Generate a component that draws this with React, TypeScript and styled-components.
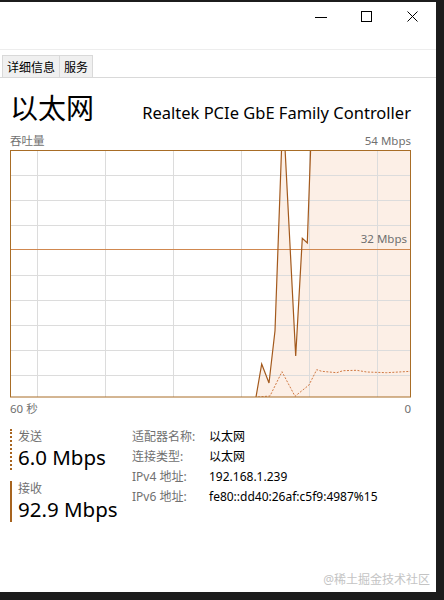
import React from "react";
import styled, { createGlobalStyle } from "styled-components";

const CJK = `"Noto Sans", "Noto Sans CJK SC", sans-serif`;
const CJK_FIRST = `"Noto Sans CJK SC", "Noto Sans", sans-serif`;
const ACCENT = "#a7641f";

const GlobalStyle = createGlobalStyle`
  html, body {
    margin: 0;
    padding: 0;
    background: #1c1c1c;
  }
  body {
    font-family: ${CJK};
    overflow: hidden;
  }
`;

const Window = styled.div`
  position: relative;
  width: 436px;
  height: 590px;
  margin-top: 2px;
  background: #ffffff;
  display: flex;
  flex-direction: column;
`;

const TitleBar = styled.div`
  height: 47px;
  display: flex;
  justify-content: flex-end;
  align-items: flex-start;
  border-bottom: 1px solid #ededed;
`;

const CtrlButton = styled.div`
  width: 46px;
  height: 28px;
  display: flex;
  align-items: center;
  justify-content: center;
  color: #000;
`;

const TabStrip = styled.div`
  height: 27px;
  display: flex;
  align-items: flex-end;
  padding-left: 2px;
  border-bottom: 1px solid #d9d9d9;
`;

const Tab = styled.div`
  height: 21px;
  padding: 0 4px;
  display: flex;
  align-items: center;
  background: #f0f0f0;
  border: 1px solid #d9d9d9;
  border-bottom: none;
  margin-right: -1px;
  font-size: 12px;
  color: #000;
`;

const Content = styled.div`
  padding: 0 25px 0 10px;
  display: flex;
  flex-direction: column;
`;

const Header = styled.div`
  margin-top: 12px;
  height: 40px;
  display: flex;
  justify-content: space-between;
  align-items: baseline;
`;

const Title = styled.div`
  font-size: 28px;
  line-height: 36px;
  color: #000;
`;

const Subtitle = styled.div`
  font-size: 16.5px;
  color: #000;
`;

const AxisRow = styled.div<{ $h: number }>`
  height: ${({ $h }) => $h}px;
  display: flex;
  justify-content: space-between;
  align-items: center;
  font-size: 11.5px;
  color: #707070;
`;

const GraphWrap = styled.div`
  position: relative;
  width: 401px;
  height: 248px;
`;

const ScaleLabel = styled.div`
  position: absolute;
  right: 4px;
  top: 81px;
  font-size: 11.5px;
  color: #707070;
`;

const Stats = styled.div`
  margin-top: 11px;
  display: flex;
`;

const StatCol = styled.div`
  width: 122px;
  display: flex;
  flex-direction: column;
  gap: 11px;
`;

const Stat = styled.div<{ $dotted?: boolean }>`
  border-left: 2px ${({ $dotted }) => ($dotted ? "dotted" : "solid")} ${ACCENT};
  padding-left: 6px;
  height: 41px;
  display: flex;
  flex-direction: column;
`;

const StatLabel = styled.div`
  font-family: ${CJK_FIRST};
  font-size: 12px;
  line-height: 14px;
  color: #707070;
`;

const StatValue = styled.div`
  font-size: 20.5px;
  line-height: 28px;
  color: #000;
`;

const InfoGrid = styled.div`
  display: grid;
  grid-template-columns: 77px auto;
  grid-auto-rows: 20px;
  align-items: center;
  font-size: 12px;
  margin-top: -3px;
`;

const InfoLabel = styled.div`
  color: #707070;
`;

const InfoValue = styled.div`
  color: #000;
`;

const Watermark = styled.div`
  position: absolute;
  right: 6px;
  bottom: 4px;
  font-size: 12px;
  color: #c4c4c4;
`;

const W = 401;
const H = 247;

const recv: [number, number][] = [
  [246, 247], [251.7, 214], [259, 233], [265, 180.7], [273, -41],
  [285.7, 206], [292.3, 88.3], [297.3, 93], [302, -40], [401, -40],
];

const send: [number, number][] = [
  [248, 247], [260, 246], [272, 221.7], [285, 246.3], [299, 235],
  [306.7, 219.7], [311.7, 221.3], [326.7, 222.7], [333, 220.7],
  [346.7, 220.3], [356.7, 222], [376.7, 222.7], [401, 221.3],
];

const pts = (p: [number, number][]) => p.map(([x, y]) => `${x},${y}`).join(" ");

const Graph = () => {
  const vx = [27, 95, 163, 231, 299, 367];
  const hy = [25, 50, 75, 125, 150, 175, 200, 225];
  return (
    <svg width={W} height={H + 1} viewBox={`0 0 ${W} ${H + 1}`}>
      <defs>
        <clipPath id="box">
          <rect x={0} y={0} width={W} height={H} />
        </clipPath>
      </defs>
      <g clipPath="url(#box)">
        <polygon points={`${pts(recv)} 401,${H} 246,${H}`} fill="#fcefe6" />
        {vx.map((x) => (
          <line key={x} x1={x + 0.5} y1={0} x2={x + 0.5} y2={H} stroke="#dcdcdc" />
        ))}
        {hy.map((y) => (
          <line key={y} x1={0} y1={y + 0.5} x2={W} y2={y + 0.5} stroke="#dcdcdc" />
        ))}
        <line x1={0} y1={99.5} x2={W} y2={99.5} stroke="#d08850" />
        <polyline points={pts(send)} fill="none" stroke="#d07a44" strokeWidth={1} strokeDasharray="2 1.5" />
        <polyline points={pts(recv)} fill="none" stroke="#a3591c" strokeWidth={1.2} />
      </g>
      <rect x={0.5} y={0.5} width={W - 1} height={H - 0.5} fill="none" stroke="#a86d26" />
    </svg>
  );
};

const App = () => {
  return (
    <>
      <GlobalStyle />
      <Window>
        <TitleBar>
          <CtrlButton>
            <svg width="12" height="12" viewBox="0 0 12 12">
              <line x1="0" y1="7.5" x2="12" y2="7.5" stroke="#000" />
            </svg>
          </CtrlButton>
          <CtrlButton>
            <svg width="12" height="12" viewBox="0 0 12 12">
              <rect x="0.5" y="1.5" width="10" height="10" fill="none" stroke="#000" />
            </svg>
          </CtrlButton>
          <CtrlButton>
            <svg width="12" height="12" viewBox="0 0 12 12">
              <path d="M0.5 1.5 L10.5 11.5 M10.5 1.5 L0.5 11.5" stroke="#000" />
            </svg>
          </CtrlButton>
        </TitleBar>
        <TabStrip>
          <Tab>详细信息</Tab>
          <Tab>服务</Tab>
        </TabStrip>
        <Content>
          <Header>
            <Title>以太网</Title>
            <Subtitle>Realtek PCIe GbE Family Controller</Subtitle>
          </Header>
          <AxisRow $h={20}>
            <span>吞吐量</span>
            <span>54 Mbps</span>
          </AxisRow>
          <GraphWrap>
            <Graph />
            <ScaleLabel>32 Mbps</ScaleLabel>
          </GraphWrap>
          <AxisRow $h={20}>
            <span>60 秒</span>
            <span>0</span>
          </AxisRow>
          <Stats>
            <StatCol>
              <Stat $dotted>
                <StatLabel>发送</StatLabel>
                <StatValue>6.0 Mbps</StatValue>
              </Stat>
              <Stat>
                <StatLabel>接收</StatLabel>
                <StatValue>92.9 Mbps</StatValue>
              </Stat>
            </StatCol>
            <InfoGrid>
              <InfoLabel>适配器名称:</InfoLabel>
              <InfoValue>以太网</InfoValue>
              <InfoLabel>连接类型:</InfoLabel>
              <InfoValue>以太网</InfoValue>
              <InfoLabel>IPv4 地址:</InfoLabel>
              <InfoValue>192.168.1.239</InfoValue>
              <InfoLabel>IPv6 地址:</InfoLabel>
              <InfoValue>fe80::dd40:26af:c5f9:4987%15</InfoValue>
            </InfoGrid>
          </Stats>
        </Content>
        <Watermark>@稀土掘金技术社区</Watermark>
      </Window>
    </>
  );
};

export default App;
